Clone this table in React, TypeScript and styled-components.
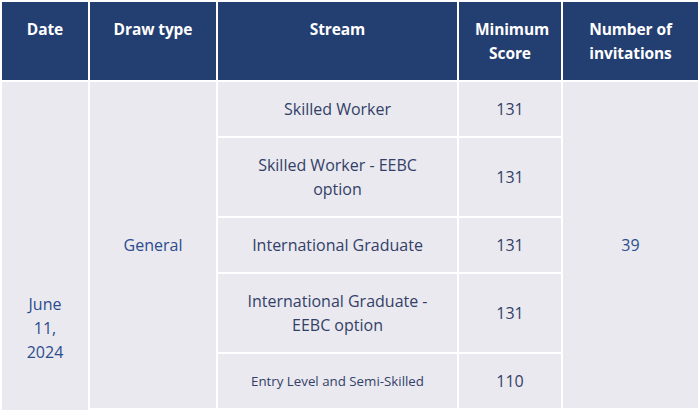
import React from "react";
import styled, { createGlobalStyle } from "styled-components";

const GlobalStyle = createGlobalStyle`
  html, body {
    margin: 0;
    padding: 0;
    background: #ffffff;
  }
  body {
    font-family: "Open Sans", "Noto Sans", sans-serif;
  }
`;

const Table = styled.table`
  width: 700px;
  border-collapse: separate;
  border-spacing: 2px;
  background: #ffffff;
  table-layout: fixed;
  font-size: 16px;
  line-height: 24px;
`;

const HeadCell = styled.th<{ $w: number }>`
  width: ${(p) => p.$w}px;
  height: 48px;
  box-sizing: border-box;
  background: #233e71;
  color: #ffffff;
  font-size: 15.5px;
  font-weight: 700;
  text-align: center;
  vertical-align: top;
  padding: 15px 16px;
  letter-spacing: -0.1px;
`;

const Cell = styled.td<{ $tone?: "blue" | "dark"; $small?: boolean }>`
  background: #e9e9ef;
  color: ${(p) => (p.$tone === "blue" ? "#2d4c8e" : "#343f68")};
  text-align: center;
  vertical-align: middle;
  padding: 15px 20px;
  font-size: ${(p) => (p.$small ? "13.3px" : "16px")};
`;

/* continuation of the date block below the visible area (next draw of the same day) */
const ContinuationCell = styled.td`
  background: #e9e9ef;
  height: 164px;
  padding: 0;
`;

const Row = styled.tr``;

type Stream = { name: string; score: number; small?: boolean };

const general: Stream[] = [
  { name: "Skilled Worker", score: 131 },
  { name: "Skilled Worker - EEBC option", score: 131 },
  { name: "International Graduate", score: 131 },
  { name: "International Graduate - EEBC option", score: 131 },
  { name: "Entry Level and Semi-Skilled", score: 110, small: true },
];

export default function App() {
  const total = general.length + 1;
  return (
    <>
      <GlobalStyle />
      <Table>
        <thead>
          <Row>
            <HeadCell $w={86}>Date</HeadCell>
            <HeadCell $w={126}>Draw type</HeadCell>
            <HeadCell $w={239}>Stream</HeadCell>
            <HeadCell $w={102}>Minimum Score</HeadCell>
            <HeadCell $w={135}>Number of invitations</HeadCell>
          </Row>
        </thead>
        <tbody>
          {general.map((s, i) => (
            <Row key={s.name}>
              {i === 0 && (
                <Cell $tone="blue" rowSpan={total}>
                  June 11, 2024
                </Cell>
              )}
              {i === 0 && (
                <Cell $tone="blue" rowSpan={general.length}>
                  General
                </Cell>
              )}
              <Cell $small={s.small}>{s.name}</Cell>
              <Cell>{s.score}</Cell>
              {i === 0 && (
                <Cell $tone="blue" rowSpan={general.length}>
                  39
                </Cell>
              )}
            </Row>
          ))}
          <Row>
            <ContinuationCell colSpan={4} />
          </Row>
        </tbody>
      </Table>
    </>
  );
}
